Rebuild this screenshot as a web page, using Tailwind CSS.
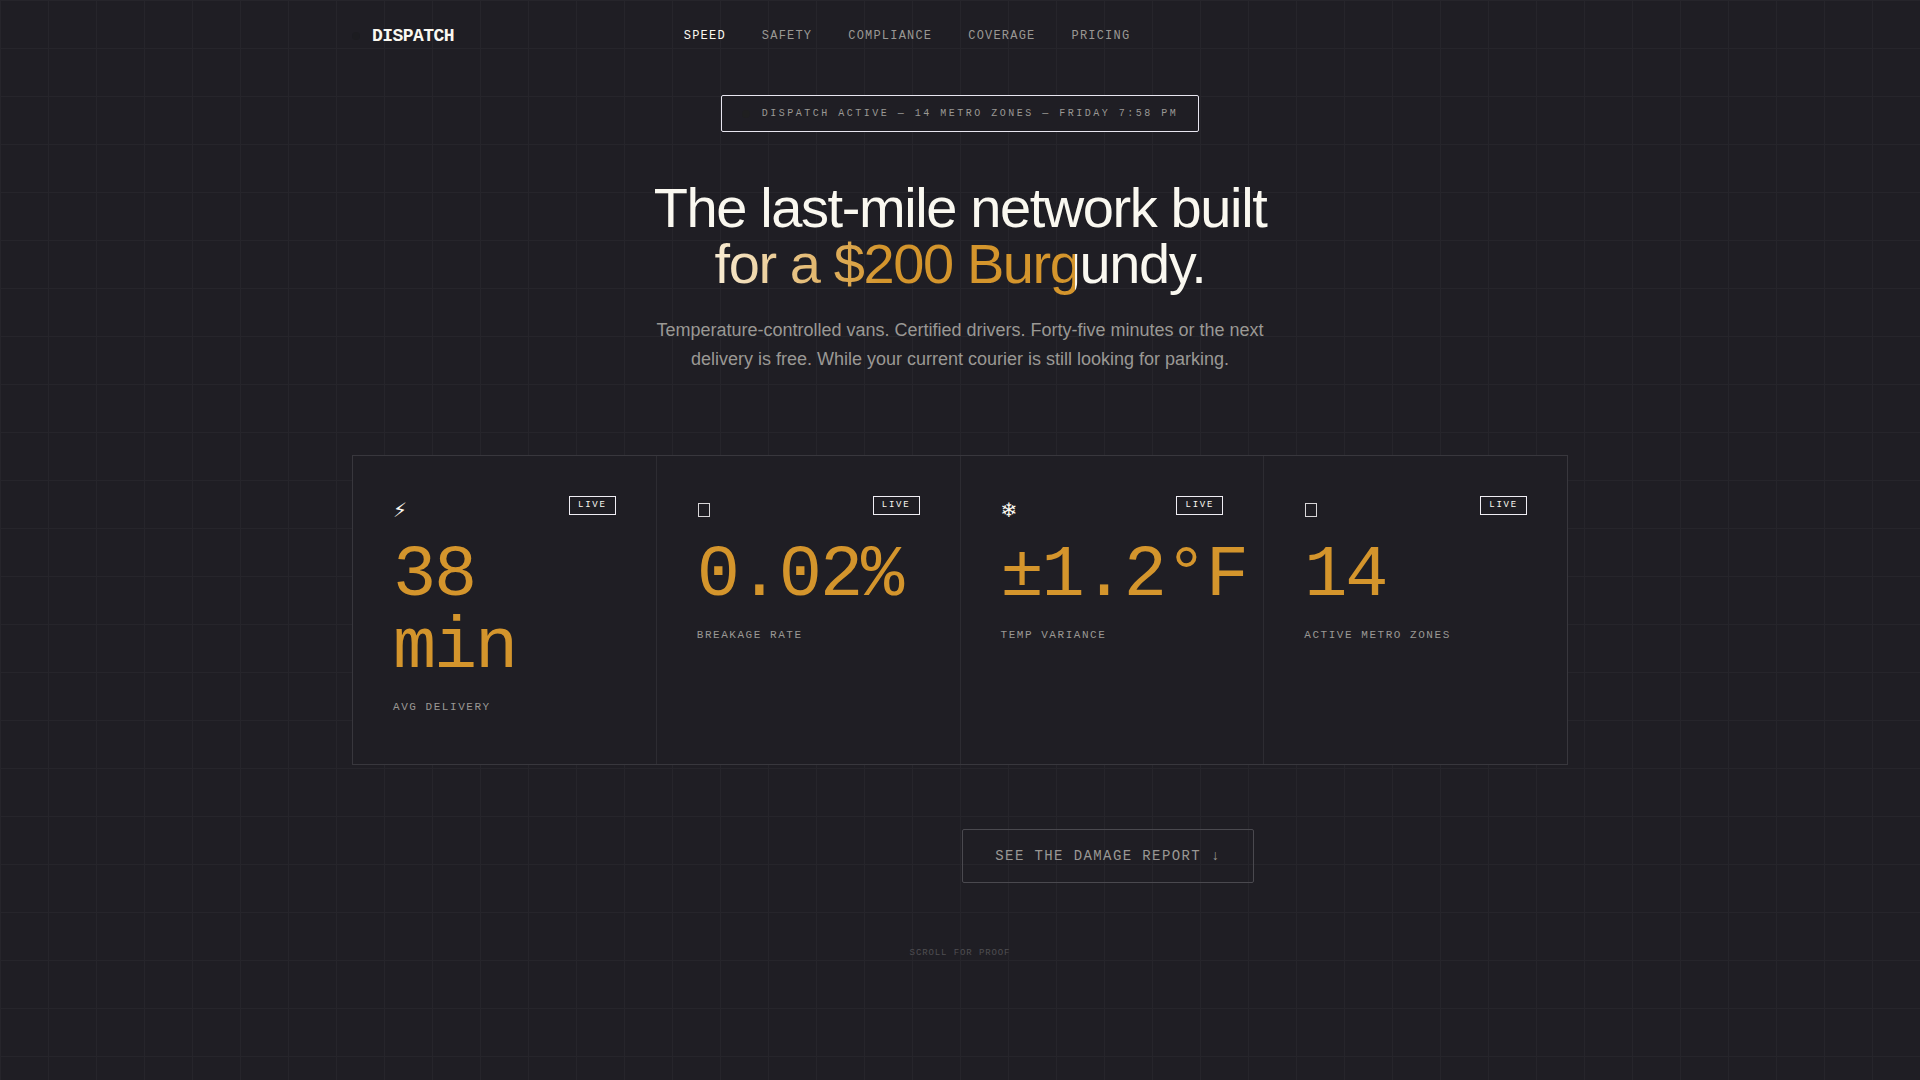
<!DOCTYPE html>
<html lang="en">
<head>
<meta charset="utf-8">
<meta name="viewport" content="width=device-width, initial-scale=1">
<title>Dispatch</title>
<script src="https://cdn.jsdelivr.net/npm/@tailwindcss/browser@4"></script>
</head>
<body class="min-h-screen bg-[#1f1e24] bg-[linear-gradient(#26252b_1px,transparent_1px),linear-gradient(90deg,#26252b_1px,transparent_1px)] bg-[size:48px_48px] font-['Liberation_Mono',monospace] text-[#faf8f0]">
<header class="mx-auto flex h-[72px] max-w-[1216px] items-center justify-between">
  <a href="#" class="flex items-center gap-3 text-lg font-bold tracking-[-0.03em]"><span class="size-2 rounded-full bg-[#1c1c20]"></span>DISPATCH</a>
  <nav class="flex gap-9 text-xs tracking-widest text-[#9a9894]">
    <a href="#speed" class="text-[#faf8f0]">SPEED</a>
    <a href="#safety">SAFETY</a>
    <a href="#compliance">COMPLIANCE</a>
    <a href="#coverage">COVERAGE</a>
    <a href="#pricing">PRICING</a>
  </nav>
  <span class="w-52"></span>
</header>
<main class="mx-auto flex max-w-[1216px] flex-col items-center pt-[23px]">
  <p class="flex items-center gap-3 rounded-xs border border-[#e8e6f0] bg-[#1f1e24] px-5 py-2.5 text-[10px] leading-[15px] tracking-[0.25em] text-[#9a9894]"><span class="size-2 rounded-full bg-[#1f1f20]"></span>DISPATCH ACTIVE — 14 METRO ZONES — FRIDAY 7:58 PM</p>
  <h1 class="mt-12 text-center font-['Liberation_Sans',sans-serif] text-[56px] leading-[56px] tracking-tight">The last-mile network built<br><span class="bg-[linear-gradient(90deg,#f8ecd4_0%,#d4952c_34%,#d4952c_73.5%,#faf8f0_73.5%)] bg-clip-text text-transparent">for a $200 Burgundy.</span></h1>
  <p class="mt-6 max-w-[640px] text-center font-['Liberation_Sans',sans-serif] text-lg leading-[29px] text-[#9a9894]">Temperature-controlled vans. Certified drivers. Forty-five minutes or the next delivery is free. While your current courier is still looking for parking.</p>

  <section class="mt-[81px] grid w-full grid-cols-4 gap-px border border-[#38373d] bg-[#2d2c32]">
    <article class="bg-[#1f1e24] px-10 pt-10 pb-12">
      <div class="flex h-8 items-start justify-between"><span class="font-['DejaVu_Sans',sans-serif] text-xl leading-7">⚡︎</span><span class="border border-[#f0eef4] px-2 pt-[3px] pb-1 text-[9px] leading-[10px] tracking-[0.2em]">LIVE</span></div>
      <p class="mt-3 text-7xl leading-[72px] tracking-[-0.03em] text-[#d4952c]">38 min</p>
      <p class="mt-3.5 text-[11px] leading-[18px] tracking-[0.14em] text-[#9a9894]">AVG DELIVERY</p>
    </article>
    <article class="bg-[#1f1e24] px-10 pt-10 pb-12">
      <div class="flex h-8 items-start justify-between"><span class="mt-[7px] ml-px h-[14px] w-3 border border-[#d8d6d8]"></span><span class="border border-[#f0eef4] px-2 pt-[3px] pb-1 text-[9px] leading-[10px] tracking-[0.2em]">LIVE</span></div>
      <p class="mt-3 text-7xl leading-[72px] tracking-[-0.03em] text-[#d4952c]">0.02%</p>
      <p class="mt-3.5 text-[11px] leading-[18px] tracking-[0.14em] text-[#9a9894]">BREAKAGE RATE</p>
    </article>
    <article class="bg-[#1f1e24] px-10 pt-10 pb-12">
      <div class="flex h-8 items-start justify-between"><span class="font-['DejaVu_Sans',sans-serif] text-xl leading-7">❄︎</span><span class="border border-[#f0eef4] px-2 pt-[3px] pb-1 text-[9px] leading-[10px] tracking-[0.2em]">LIVE</span></div>
      <p class="mt-3 text-7xl leading-[72px] tracking-[-0.03em] text-[#d4952c]">±1.2°F</p>
      <p class="mt-3.5 text-[11px] leading-[18px] tracking-[0.14em] text-[#9a9894]">TEMP VARIANCE</p>
    </article>
    <article class="bg-[#1f1e24] px-10 pt-10 pb-12">
      <div class="flex h-8 items-start justify-between"><span class="mt-[7px] ml-px h-[14px] w-3 border border-[#d8d6d8]"></span><span class="border border-[#f0eef4] px-2 pt-[3px] pb-1 text-[9px] leading-[10px] tracking-[0.2em]">LIVE</span></div>
      <p class="mt-3 text-7xl leading-[72px] tracking-[-0.03em] text-[#d4952c]">14</p>
      <p class="mt-3.5 text-[11px] leading-[18px] tracking-[0.14em] text-[#9a9894]">ACTIVE METRO ZONES</p>
    </article>
  </section>

  <div class="mt-16 pl-[296px]">
    <button type="button" class="rounded-xs border border-[#4a494f] px-8 py-4 text-sm tracking-widest text-[#9a9894]">SEE THE DAMAGE REPORT ↓</button>
  </div>
  <p class="mt-[63px] text-[9px] leading-[14px] tracking-widest text-[#4f4e52]">SCROLL FOR PROOF</p>
</main>
</body>
</html>
